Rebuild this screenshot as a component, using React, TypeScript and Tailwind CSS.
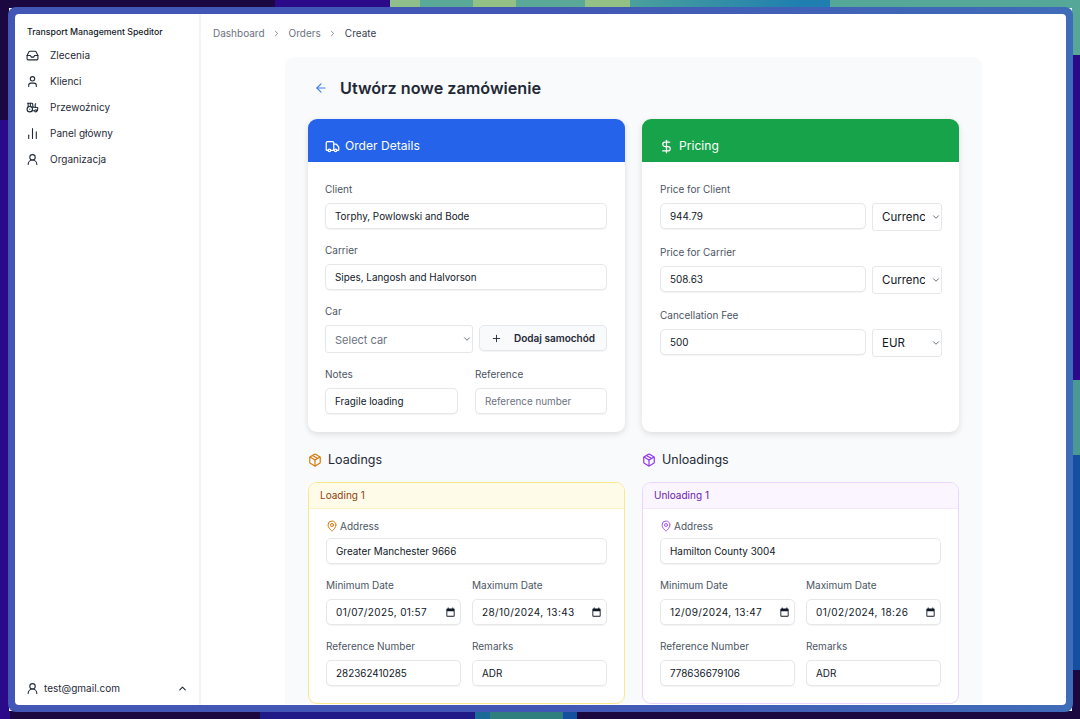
import {
  ArrowLeft,
  ChartNoAxesColumn,
  ChevronDown,
  ChevronRight,
  ChevronUp,
  DollarSign,
  Inbox,
  MapPin,
  Package,
  Plus,
  Tractor,
  Truck,
  User,
  UserRound,
} from "lucide-react";

const navItems = [
  { label: "Zlecenia", icon: Inbox },
  { label: "Klienci", icon: User },
  { label: "Przewoźnicy", icon: Tractor },
  { label: "Panel główny", icon: ChartNoAxesColumn },
  { label: "Organizacja", icon: UserRound },
];

const inputCls =
  "h-[26px] w-full rounded-[5px] border border-[#e5e7eb] bg-white px-[9px] text-[9.9px] text-[#111827] shadow-[0_1px_1px_rgba(0,0,0,0.05)] outline-none placeholder:text-[#6b7280]";

const labelCls = "block text-[10px] leading-[14px] text-[#4b5563]";

const CalendarGlyph = () => (
  <svg width="11" height="11" viewBox="0 0 24 24" className="shrink-0" fill="#111827">
    <path d="M19 3h-1V1h-2v2H8V1H6v2H5a2 2 0 0 0-2 2v14a2 2 0 0 0 2 2h14a2 2 0 0 0 2-2V5a2 2 0 0 0-2-2zm0 16H5V9h14v10z" />
  </svg>
);

const DateField = ({ label, value }: { label: string; value: string }) => (
  <div>
    <label className={labelCls}>{label}</label>
    <div className="mt-[7px] flex h-[26px] items-center justify-between rounded-[5px] border border-[#e5e7eb] bg-white pl-[9px] pr-[4px] text-[10px] tracking-[0.4px] text-[#111827] shadow-[0_1px_1px_rgba(0,0,0,0.05)]">
      <span>{value}</span>
      <CalendarGlyph />
    </div>
  </div>
);

const TextField = ({ label, value, placeholder }: { label: string; value?: string; placeholder?: string }) => (
  <div>
    <label className={labelCls}>{label}</label>
    <input readOnly value={value} placeholder={placeholder} className={`mt-[7px] ${inputCls}`} />
  </div>
);

const SelectBox = ({ value, muted, className }: { value: string; muted?: boolean; className: string }) => (
  <div className={`relative ${className}`}>
    <select
      defaultValue={value}
      className={`h-full w-full appearance-none rounded-[3px] border border-[#e5e7eb] bg-white pl-[9px] pr-[16px] pt-[2px] outline-none ${
        muted ? "text-[11px] text-[#6b7280]" : "text-[11.5px] text-[#111827]"
      }`}
    >
      <option>{value}</option>
    </select>
    <ChevronDown className="pointer-events-none absolute right-[1px] top-1/2 size-[10px] -translate-y-1/2 text-[#4b5563]" />
  </div>
);

const PriceRow = ({ label, value, currency }: { label: string; value: string; currency: string }) => (
  <div>
    <label className={labelCls}>{label}</label>
    <div className="mt-[7px] flex items-start gap-[6px]">
      <input readOnly value={value} className={`flex-1 ${inputCls}`} />
      <SelectBox value={currency} className="h-[28px] w-[70px] shrink-0" />
    </div>
  </div>
);

const StopCard = ({
  title,
  address,
  minDate,
  maxDate,
  reference,
  border,
  headerCls,
  pinCls,
}: {
  title: string;
  address: string;
  minDate: string;
  maxDate: string;
  reference: string;
  border: string;
  headerCls: string;
  pinCls: string;
}) => (
  <div className={`h-[222px] overflow-hidden rounded-[9px] border bg-white ${border}`}>
    <div className={`flex h-[26px] items-center border-b pl-[11px] text-[10px] ${headerCls}`}>{title}</div>
    <div className="px-[17px] pt-[10px]">
      <div className="flex items-center gap-[2px] text-[10px] leading-[14px] text-[#4b5563]">
        <MapPin className={`size-[12px] ${pinCls}`} />
        <span>Address</span>
      </div>
      <input readOnly value={address} className={`mt-[5px] ${inputCls}`} />
      <div className="mt-[14px] grid grid-cols-2 gap-x-[11px] gap-y-[14px]">
        <DateField label="Minimum Date" value={minDate} />
        <DateField label="Maximum Date" value={maxDate} />
        <TextField label="Reference Number" value={reference} />
        <TextField label="Remarks" value="ADR" />
      </div>
    </div>
  </div>
);

export default function App() {
  return (
    <div className="h-[719px] w-[1080px] overflow-hidden font-['Inter',sans-serif] [background:linear-gradient(90deg,#1c0840_0,#1c0840_275px,#2a0a88_275px,#2a0a88_390px,#8fbf8a_390px,#8fbf8a_420px,#5aa898_420px,#5aa898_473px,#93c084_473px,#93c084_516px,#5aa898_516px,#5aa898_585px,#93c084_585px,#93c084_630px,#4aa09c_630px,#1f7fb0_800px,#1f7fb0_830px,#55a898_830px)_top/100%_8px_no-repeat,linear-gradient(90deg,#2a0a88_0,#2a0a88_10px,#1c0840_10px,#1c0840_260px,#1f1a88_260px,#1f1a88_475px,#1a6a98_475px,#1a6a98_490px,#2f7f7f_490px,#2f7f7f_563px,#1550a0_563px,#1550a0_577px,#1c0840_577px)_bottom/100%_8px_no-repeat,linear-gradient(180deg,#55a898_0,#55a898_55px,#2a0a88_55px,#2a0a88_380px,#4a9a94_380px,#4a9a94_455px,#1550a0_455px,#1550a0_670px,#1c0840_670px)_right/8px_100%_no-repeat,linear-gradient(180deg,#1c0840_0,#1c0840_120px,#2a0a88_120px)_left/9px_100%_no-repeat]">
      <div className="relative left-[8px] top-[7px] h-[705px] w-[1065px] rounded-[8px] bg-[linear-gradient(90deg,#4257b5,#4257b5_50%,#3f6cb8)] p-[7px]">
        <div className="flex h-[691px] w-[1051px] overflow-hidden rounded-[4px] bg-white">
          <aside className="flex w-[186px] shrink-0 flex-col border-r-2 border-[#f3f4f6] px-[12px] pb-[9px] pt-[12px]">
            <div className="text-[8.75px] font-medium leading-[12px] text-[#111827]">Transport Management Speditor</div>
            <nav className="mt-[4px] flex flex-col">
              {navItems.map(({ label, icon: Icon }) => (
                <div key={label} className="-ml-[1px] flex h-[26px] items-center gap-[11px] text-[10px] text-[#1f2937]">
                  <Icon className="size-[13px]" strokeWidth={2} />
                  <span>{label}</span>
                </div>
              ))}
            </nav>
            <div className="-mx-[1px] mt-auto flex items-center justify-between text-[10px] text-[#1f2937]">
              <div className="flex items-center gap-[5px]">
                <UserRound className="size-[13px]" />
                <span>test@gmail.com</span>
              </div>
              <ChevronUp className="size-[11px]" strokeWidth={2.5} />
            </div>
          </aside>
          <main className="min-w-0 flex-1">
            <div className="mb-[5px] flex h-[38px] items-center gap-[7.5px] px-[12px] text-[10px] text-[#6b7280]">
              <span>Dashboard</span>
              <ChevronRight className="size-[9px]" />
              <span>Orders</span>
              <ChevronRight className="size-[9px]" />
              <span className="text-[#374151]">Create</span>
            </div>
            <div className="ml-[84px] w-[697px] rounded-t-[9px] bg-[#f9fafb] px-[23px] pt-[19px]">
              <div className="flex h-[24px] items-center gap-[12px] pl-[6px]">
                <ArrowLeft className="size-[14px] text-[#3b82f6]" />
                <h1 className="text-[16.2px] font-semibold leading-[24px] text-[#1f2937]">Utwórz nowe zamówienie</h1>
              </div>
              <div className="mt-[19px] grid grid-cols-2 gap-x-[17px]">
                <section className="h-[313px] rounded-[9px] bg-white shadow-[0_2px_6px_rgba(0,0,0,0.12)]">
                  <div className="flex h-[43px] items-center gap-[5px] rounded-t-[9px] bg-[#2563eb] pl-[17px] pt-[12px] text-[12.1px] font-normal text-white">
                    <Truck className="size-[15px]" />
                    <span>Order Details</span>
                  </div>
                  <div className="pl-[17px] pr-[18px] pt-[20px]">
                    <TextField label="Client" value="Torphy, Powlowski and Bode" />
                    <div className="mt-[14px]">
                      <TextField label="Carrier" value="Sipes, Langosh and Halvorson" />
                    </div>
                    <div className="mt-[14px]">
                      <label className={labelCls}>Car</label>
                      <div className="mt-[7px] flex items-start gap-[6px]">
                        <SelectBox value="Select car" muted className="h-[28px] w-[148px] shrink-0" />
                        <button className="flex h-[26px] flex-1 items-center justify-center gap-[12px] rounded-[5px] border border-[#e5e7eb] bg-[#f9fafb] text-[10px] font-semibold text-[#1f2937] shadow-[0_1px_1px_rgba(0,0,0,0.05)]">
                          <Plus className="size-[11px]" />
                          Dodaj samochód
                        </button>
                      </div>
                    </div>
                    <div className="mt-[14px] grid grid-cols-[133px_132px] justify-between">
                      <TextField label="Notes" value="Fragile loading" />
                      <TextField label="Reference" placeholder="Reference number" />
                    </div>
                  </div>
                </section>
                <section className="h-[313px] rounded-[9px] bg-white shadow-[0_2px_6px_rgba(0,0,0,0.12)]">
                  <div className="flex h-[43px] items-center gap-[5px] rounded-t-[9px] bg-[#16a34a] pl-[17px] pt-[12px] text-[12.1px] font-normal text-white">
                    <DollarSign className="size-[15px]" />
                    <span>Pricing</span>
                  </div>
                  <div className="flex flex-col gap-[14px] pl-[18px] pr-[17px] pt-[20px]">
                    <PriceRow label="Price for Client" value="944.79" currency="Currency" />
                    <PriceRow label="Price for Carrier" value="508.63" currency="Currency" />
                    <PriceRow label="Cancellation Fee" value="500" currency="EUR" />
                  </div>
                </section>
              </div>
              <div className="mt-[18px] grid grid-cols-2 gap-x-[17px]">
                <div>
                  <h2 className="flex h-[20px] items-center gap-[6px] text-[12.5px] font-normal text-[#1f2937]">
                    <Package className="size-[14px] text-[#d97706]" />
                    Loadings
                  </h2>
                  <div className="mt-[12px]">
                    <StopCard
                      title="Loading 1"
                      address="Greater Manchester 9666"
                      minDate="01/07/2025, 01:57"
                      maxDate="28/10/2024, 13:43"
                      reference="282362410285"
                      border="border-[#fde68a]"
                      headerCls="border-[#fef3c7] bg-[#fefce8] text-[#92400e]"
                      pinCls="text-[#d97706]"
                    />
                  </div>
                </div>
                <div>
                  <h2 className="flex h-[20px] items-center gap-[6px] text-[12.5px] font-normal text-[#1f2937]">
                    <Package className="size-[14px] text-[#9333ea]" />
                    Unloadings
                  </h2>
                  <div className="mt-[12px]">
                    <StopCard
                      title="Unloading 1"
                      address="Hamilton County 3004"
                      minDate="12/09/2024, 13:47"
                      maxDate="01/02/2024, 18:26"
                      reference="778636679106"
                      border="border-[#e9d5ff]"
                      headerCls="border-[#f3e8ff] bg-[#faf5ff] text-[#6b21a8]"
                      pinCls="text-[#a855f7]"
                    />
                  </div>
                </div>
              </div>
            </div>
          </main>
        </div>
      </div>
    </div>
  );
}
